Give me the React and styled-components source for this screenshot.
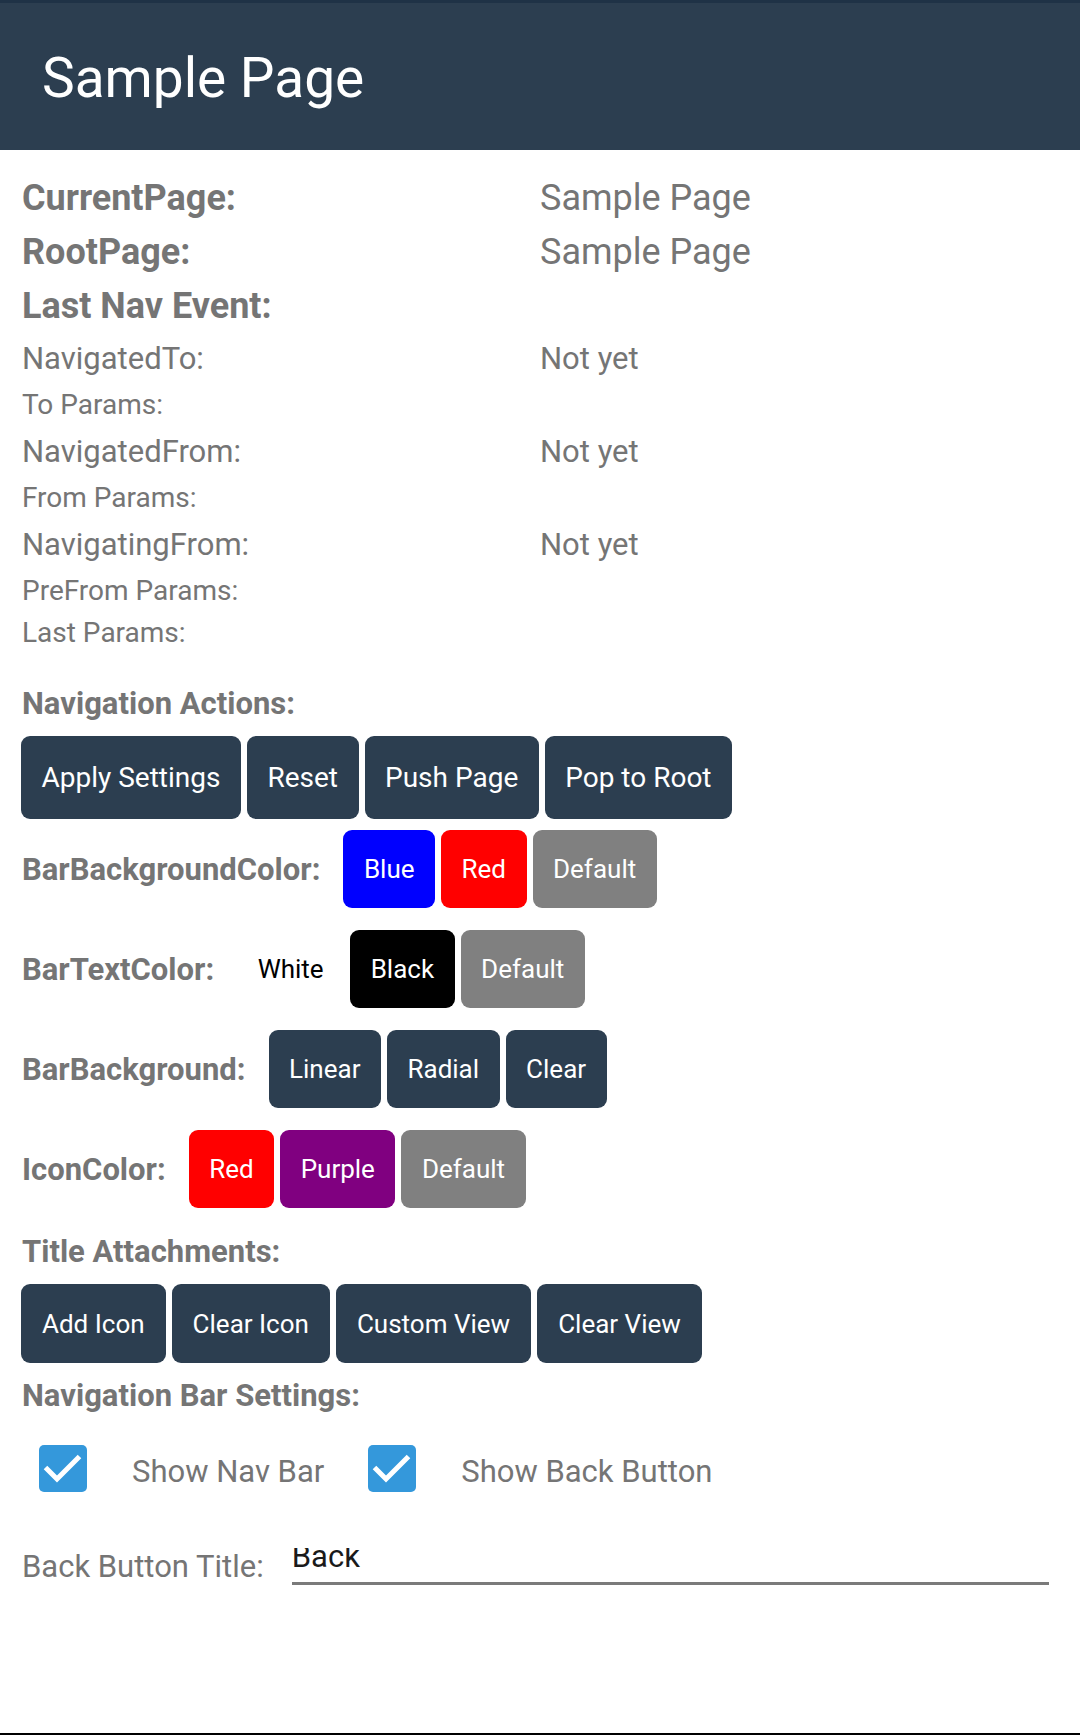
import React from 'react';
import styled, { createGlobalStyle } from 'styled-components';

const GlobalStyle = createGlobalStyle`
  * {
    box-sizing: border-box;
  }
  body {
    margin: 0;
    background: #fff;
    font-family: Roboto, "Noto Sans", "Liberation Sans", sans-serif;
  }
`;

const infoRows = [
  { label: 'NavigatedTo:', value: 'Not yet', size: 'md' },
  { label: 'To Params:', size: 'sm' },
  { label: 'NavigatedFrom:', value: 'Not yet', size: 'md' },
  { label: 'From Params:', size: 'sm' },
  { label: 'NavigatingFrom:', value: 'Not yet', size: 'md' },
  { label: 'PreFrom Params:', size: 'sm' },
  { label: 'Last Params:', size: 'sm' },
];

const colorRows = [
  {
    label: 'BarBackgroundColor:',
    buttons: [
      { text: 'Blue', bg: '#0000ff' },
      { text: 'Red', bg: '#ff0000' },
      { text: 'Default', bg: '#808080' },
    ],
  },
  {
    label: 'BarTextColor:',
    buttons: [
      { text: 'White', bg: '#ffffff', fg: '#000' },
      { text: 'Black', bg: '#000000' },
      { text: 'Default', bg: '#808080' },
    ],
  },
  {
    label: 'BarBackground:',
    buttons: [
      { text: 'Linear', bg: '#2c3e50' },
      { text: 'Radial', bg: '#2c3e50' },
      { text: 'Clear', bg: '#2c3e50' },
    ],
  },
  {
    label: 'IconColor:',
    buttons: [
      { text: 'Red', bg: '#ff0000' },
      { text: 'Purple', bg: '#800080' },
      { text: 'Default', bg: '#808080' },
    ],
  },
];

const CheckIcon = () => (
  <svg width="48" height="47" viewBox="0 0 48 47">
    <rect x="0" y="0" width="48" height="47" rx="5" fill="#3498db" />
    <path d="M6.5 22.5 L18 34 L40.5 11.5" fill="none" stroke="#fff" strokeWidth="5" />
  </svg>
);

const App = () => (
  <Page>
    <GlobalStyle />
    <Header>
      <Title>Sample Page</Title>
    </Header>

    <Content>
      <InfoGrid>
        <BigLabel>CurrentPage:</BigLabel>
        <BigValue>Sample Page</BigValue>
        <BigLabel>RootPage:</BigLabel>
        <BigValue>Sample Page</BigValue>
        <BigLabel>Last Nav Event:</BigLabel>
        <BigValue />
        {infoRows.map((row) => (
          <React.Fragment key={row.label}>
            <InfoText $size={row.size}>{row.label}</InfoText>
            <InfoText $size={row.size}>{row.value}</InfoText>
          </React.Fragment>
        ))}
      </InfoGrid>

      <SectionLabel $top={28}>Navigation Actions:</SectionLabel>
      <ButtonRow>
        <Button $h={83} $fs={28}>Apply Settings</Button>
        <Button $h={83} $fs={28}>Reset</Button>
        <Button $h={83} $fs={28}>Push Page</Button>
        <Button $h={83} $fs={28}>Pop to Root</Button>
      </ButtonRow>

      <ColorRows>
        {colorRows.map((row) => (
          <ColorRow key={row.label}>
            <RowLabel>{row.label}</RowLabel>
            <ButtonGroup>
              {row.buttons.map((b) => (
                <Button key={b.text} $bg={b.bg} $fg={b.fg} $h={78}>
                  {b.text}
                </Button>
              ))}
            </ButtonGroup>
          </ColorRow>
        ))}
      </ColorRows>

      <SectionLabel $top={22}>Title Attachments:</SectionLabel>
      <ButtonRow>
        <Button $h={79} $px={21}>Add Icon</Button>
        <Button $h={79} $px={21}>Clear Icon</Button>
        <Button $h={79} $px={21}>Custom View</Button>
        <Button $h={79} $px={21}>Clear View</Button>
      </ButtonRow>

      <SectionLabel $top={11}>Navigation Bar Settings:</SectionLabel>
      <CheckRow>
        <CheckItem>
          <CheckIcon />
          <CheckText>Show Nav Bar</CheckText>
        </CheckItem>
        <CheckItem>
          <CheckIcon />
          <CheckText>Show Back Button</CheckText>
        </CheckItem>
      </CheckRow>

      <EntryRow>
        <EntryLabel>Back Button Title:</EntryLabel>
        <Entry>
          <EntryText>Back</EntryText>
        </Entry>
      </EntryRow>
    </Content>
  </Page>
);

const Page = styled.div`
  width: 1080px;
  min-height: 1735px;
  display: flex;
  flex-direction: column;
  border-bottom: 2px solid #000;
  background: #fff;
`;
const Header = styled.header`
  height: 150px;
  border-top: 3px solid #1f3246;
  background: #2c3e50;
  padding: 48px 0 0 42px;
`;
const Title = styled.h1`
  margin: 0;
  font-size: 55px;
  line-height: 55px;
  font-weight: 400;
  color: #fff;
`;
const Content = styled.main`
  flex: 1;
  display: flex;
  flex-direction: column;
  padding: 21px 31px 0 21px;
  color: #757575;
`;
const InfoGrid = styled.div`
  display: grid;
  grid-template-columns: 518px 1fr;
  padding-left: 1px;
`;
const BigLabel = styled.div`
  font-size: 36px;
  line-height: 54px;
  font-weight: 700;
`;
const BigValue = styled.div`
  font-size: 36px;
  line-height: 54px;
  min-height: 54px;
`;
const InfoText = styled.div`
  font-size: ${(p) => (p.$size === 'md' ? '31px' : '28px')};
  line-height: ${(p) => (p.$size === 'md' ? '51px' : '42px')};
  min-height: ${(p) => (p.$size === 'md' ? '51px' : '42px')};
`;
const SectionLabel = styled.div`
  margin-top: ${(p) => p.$top}px;
  padding-left: 1px;
  font-size: 31px;
  line-height: 44px;
  font-weight: 700;
`;
const ButtonRow = styled.div`
  display: flex;
  gap: 6px;
  margin-top: 10px;
`;
const Button = styled.button`
  height: ${(p) => p.$h}px;
  padding: 0 ${(p) => p.$px || 20.5}px;
  border: none;
  border-radius: 9px;
  background: ${(p) => p.$bg || '#2c3e50'};
  color: ${(p) => p.$fg || '#fff'};
  font-family: Roboto, "Noto Sans", sans-serif;
  font-size: ${(p) => p.$fs || 26}px;
  white-space: nowrap;
  cursor: pointer;
`;
const ColorRows = styled.div`
  display: flex;
  flex-direction: column;
  gap: 22px;
  margin-top: 11px;
`;
const ColorRow = styled.div`
  display: flex;
  align-items: center;
  gap: 23px;
  padding-left: 1px;
`;
const RowLabel = styled.span`
  font-size: 31px;
  font-weight: 700;
`;
const ButtonGroup = styled.div`
  display: flex;
  gap: 6px;
`;
const CheckRow = styled.div`
  display: flex;
  gap: 44px;
  margin: 27px 0 0 18px;
`;
const CheckItem = styled.label`
  display: flex;
  align-items: flex-start;
  gap: 45px;
`;
const CheckText = styled.span`
  margin-top: 3px;
  font-size: 31px;
  line-height: 47px;
`;
const EntryRow = styled.div`
  display: flex;
  align-items: flex-start;
  gap: 28px;
  margin-top: 50px;
  padding-left: 1px;
`;
const EntryLabel = styled.span`
  font-size: 31px;
  line-height: 44px;
`;
const Entry = styled.div`
  flex: 1;
  height: 37px;
  margin-top: 3px;
  overflow: hidden;
  border-bottom: 3px solid #7a7a7a;
`;
const EntryText = styled.span`
  display: block;
  margin-top: -7px;
  font-size: 31px;
  line-height: 31px;
  color: #1a1a1a;
`;

export default App;
